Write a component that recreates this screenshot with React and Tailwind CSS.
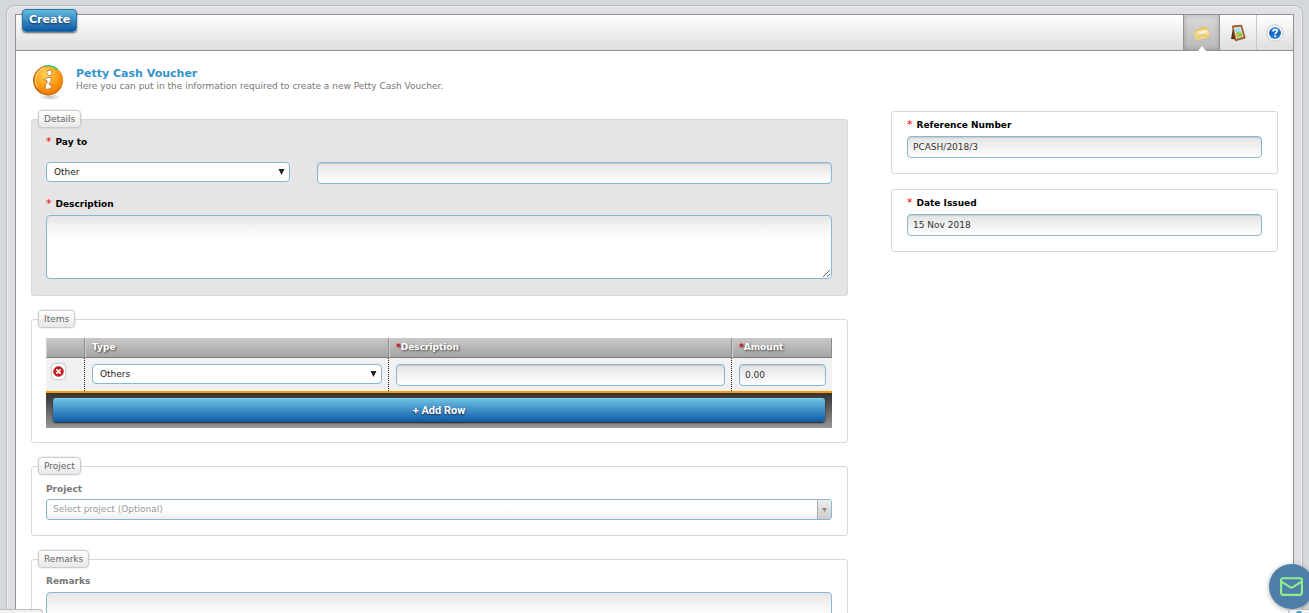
import { useState } from 'react';
import { Mail } from 'lucide-react';

const inputClass =
  'block h-[22px] w-full rounded border border-[#85b8d2] bg-linear-to-b from-[#e4e4e4] to-white px-[5px] text-[9px] text-[#333] shadow-[inset_0_1px_1px_rgba(0,0,0,0.12)] outline-none';

const textareaClass =
  'block h-16 w-full rounded border border-[#85b8d2] bg-white bg-[linear-gradient(#e6e6e6,#fff_22px)] px-[5px] py-1 text-[9px] text-[#333] outline-none';

const InfoIcon = () => (
  <svg width="34" height="36" viewBox="0 0 34 36" aria-hidden="true">
    <defs>
      <radialGradient id="info-fill" cx="0.4" cy="0.3" r="0.75">
        <stop offset="0" stopColor="#ffd75e" />
        <stop offset="0.5" stopColor="#ffa51c" />
        <stop offset="1" stopColor="#ee7600" />
      </radialGradient>
      <radialGradient id="info-shadow">
        <stop offset="0" stopColor="#999" stopOpacity="0.6" />
        <stop offset="1" stopColor="#999" stopOpacity="0" />
      </radialGradient>
    </defs>
    <ellipse cx="19" cy="32" rx="11" ry="3.5" fill="url(#info-shadow)" />
    <circle cx="17" cy="15.5" r="15" fill="#c76a10" />
    <circle cx="17.8" cy="15" r="14" fill="url(#info-fill)" />
    <path d="M6 22A13.4 13.4 0 0 1 14 2.6" fill="none" stroke="#ffe3a0" strokeWidth="1" />
    <path d="M13 1Q21 -.6 27 4.6" fill="none" stroke="#1fd07c" strokeWidth="1.2" />
    <g stroke="#b8702a" strokeWidth="0.9" fill="#fff" strokeLinejoin="round">
      <circle cx="18.4" cy="7.8" r="2.7" />
      <path d="M12.8 14.8Q16 11.4 20.2 12.6Q21.4 15.4 18.4 18.4Q17.6 20.6 21.4 20.4Q21 23.8 17 24.4Q13.4 24.4 14.4 20.8Q15 18.6 16.6 16.6Q16.4 15.2 12.8 14.8Z" />
    </g>
  </svg>
);

const EnvelopeIcon = () => (
  <svg width="18" height="18" viewBox="0 0 18 18" aria-hidden="true">
    <path d="M1.4 7.6L11 2Q12 1.6 12.8 2.6L16.2 7.4L16.4 12.8L2.6 16.4Z" fill="#e9c469" />
    <path d="M3.4 7.8L13.2 5.4L15.4 8L8.4 12Z" fill="#fdf3cf" />
    <path d="M4.6 8.6L13.6 7.4L8.4 11.2Z" fill="#e6eff0" />
    <path d="M1.4 7.6L7.8 10.8L16.2 7.4L16.4 12.8L2.6 16.4Z" fill="#f3d684" />
    <path d="M2.6 16.4L8 10.8L16.4 12.8" fill="none" stroke="#ddb55a" strokeWidth="0.7" />
  </svg>
);

const PictureIcon = () => (
  <svg width="18" height="18" viewBox="0 0 18 18" aria-hidden="true">
    <path d="M4 4L2 15L8 15.4Z" fill="#5b3217" />
    <path d="M3.4 2L12.6 1.2L16.2 14L6.4 16.8Z" fill="#b7622a" stroke="#7d3d16" strokeWidth="0.7" />
    <path d="M4.8 3.6L11.6 3L14.4 12.8L7.2 14.8Z" fill="#f6fafa" />
    <path d="M5.6 4.4L11 3.8L13.4 12.2L7.8 13.8Z" fill="#9be0f4" />
    <path d="M7 9.6L9 7.8L10.4 9L12.6 8.6L13.6 12.2L7.8 13.8Z" fill="#7ecb36" />
    <circle cx="8.6" cy="10.4" r="1.4" fill="#ffb52e" />
  </svg>
);

const HelpIcon = () => (
  <svg width="18" height="18" viewBox="0 0 18 18" aria-hidden="true">
    <defs>
      <linearGradient id="help-fill" x1="0" y1="0" x2="0" y2="1">
        <stop offset="0" stopColor="#4d9be8" />
        <stop offset="0.5" stopColor="#1462bd" />
        <stop offset="1" stopColor="#2f8fe6" />
      </linearGradient>
    </defs>
    <circle cx="9" cy="9" r="8.2" fill="#fafafa" stroke="#bdbdbd" strokeWidth="0.8" />
    <circle cx="9" cy="9" r="6" fill="url(#help-fill)" />
    <path d="M7 7.4Q7 5.6 9.1 5.6Q11.2 5.6 11.2 7.1Q11.2 8.1 10 8.7Q9.1 9.2 9.1 10.2" fill="none" stroke="#fff" strokeWidth="1.6" />
    <circle cx="9.1" cy="12" r="1" fill="#fff" />
  </svg>
);

const DeleteIcon = () => (
  <svg width="11" height="11" viewBox="0 0 12 12" aria-hidden="true">
    <circle cx="6" cy="6" r="5.4" fill="#c81e24" stroke="#9c1216" strokeWidth="0.6" />
    <path d="M4.2 4.2L7.8 7.8M7.8 4.2L4.2 7.8" stroke="#fff" strokeWidth="1.8" strokeLinecap="round" />
  </svg>
);

const Label = ({ htmlFor, required, children }) => (
  <label
    htmlFor={htmlFor}
    className={`block text-[9px] leading-[14px] font-bold ${required ? 'text-black' : 'text-[#777]'}`}
  >
    {required && <span className="mr-1 text-[11px] leading-none font-normal text-[#f00]">*</span>}
    {children}
  </label>
);

const Select = ({ id, label, options }) => (
  <div className="relative">
    <select
      id={id}
      aria-label={label}
      className="block h-5 w-full appearance-none rounded border border-[#85b8d2] bg-white pt-px pr-5 pl-[7px] text-[9px] text-[#222] outline-none"
    >
      {options.map((o) => <option key={o}>{o}</option>)}
    </select>
    <svg className="pointer-events-none absolute top-[7px] right-[5px]" width="7" height="6" viewBox="0 0 7 6" aria-hidden="true">
      <path d="M0.5 0H6.5L3.5 6Z" fill="#222" />
    </svg>
  </div>
);

const Section = ({ title, className = 'pb-[15px]', children }) => (
  <fieldset className={`min-w-0 rounded-[3px] border border-[#d9d9d9] pr-[15px] pl-[14px] ${className}`}>
    <legend className="-ml-2 h-[18px] rounded border border-[#ccc] bg-linear-to-b from-white to-[#e8e8e8] px-[5px] text-[9px] leading-4 text-[#666] shadow-[0_0_2px_rgba(0,0,0,0.2)]">
      {title}
    </legend>
    {children}
  </fieldset>
);

const Card = ({ children }) => (
  <div className="rounded-[3px] border border-[#d9d9d9] px-[15px] pt-[6px] pb-[15px]">
    {children}
  </div>
);

const headClass =
  'h-5 border-r border-b border-r-[#8d8d8d] border-b-[#7b7b7b] border-l border-l-[#d0d0d0] px-[6px] pb-px text-left text-[9px] leading-none font-bold text-white [text-shadow:1px_1px_2px_#444]';

const cellClass = 'h-[33px] border-r border-dotted border-[#222] pt-[6px] pr-[6px] pl-[7px] align-top last:border-r-0';

export default function App() {
  const [rows, setRows] = useState([1]);

  const addRow = () => setRows((prev) => [...prev, Date.now()]);
  const removeRow = (id) => setRows((prev) => prev.filter((r) => r !== id));

  return (
    <div className="h-screen overflow-y-auto bg-[#d4d8db] px-[6px] pt-[5px] font-['DejaVu_Sans',Verdana,sans-serif] [scrollbar-width:none]">
      <div className="min-h-full rounded-t-[9px] border border-[#b6babe] bg-[#dfe0e4] px-2 pt-2 shadow-[inset_0_0_0_1px_#f2f2f5]">
        <div className="border border-[#929292] bg-white">
          {/* Toolbar */}
          <header className="flex h-9 items-start justify-between border-b border-[#929292] bg-linear-to-b from-white to-[#dedede] pl-[6px]">
            <button className="-mt-[6px] h-[23px] rounded border border-[#2a74a8] bg-linear-to-b from-[#62bbdf] to-[#0b58a2] px-[6px] pb-[2px] text-[11px] leading-none font-bold text-white shadow-[0_1px_2px_rgba(0,0,0,0.6)] [text-shadow:0_1px_2px_#124]">
              Create
            </button>
            <nav className="flex h-[35px]">
              <button aria-label="Messages" className="relative flex w-9 items-center justify-center border-l border-[#929292] bg-linear-to-b from-[#dadada] to-[#b9b9b9] shadow-[inset_0_0_5px_rgba(0,0,0,0.2)]">
                <EnvelopeIcon />
                <span className="absolute -bottom-px left-[14px] border-x-[4px] border-b-[5px] border-x-transparent border-b-white" />
              </button>
              <button aria-label="Gallery" className="flex w-[37px] items-center justify-center border-l border-[#929292]">
                <PictureIcon />
              </button>
              <button aria-label="Help" className="flex w-[37px] items-center justify-center border-l border-[#c6c6c6]">
                <HelpIcon />
              </button>
            </nav>
          </header>

          <main className="px-[15px] pt-[14px] pb-8">
            <div className="mb-[9px] flex gap-[10px]">
              <InfoIcon />
              <div className="pt-[2px] pl-px">
                <h1 className="text-[11px] leading-[14px] font-bold text-[#3393cc]">Petty Cash Voucher</h1>
                <p className="text-[9px] leading-[11px] text-[#777]">
                  Here you can put in the information required to create a new Petty Cash Voucher.
                </p>
              </div>
            </div>

            <div className="grid grid-cols-[817fr_387fr] items-start gap-[43px]">
              <form className="flex min-w-0 flex-col gap-[14px]" onSubmit={(e) => e.preventDefault()}>
                <Section title="Details" className="bg-[#e5e5e5] pb-4">
                  <div className="pt-[7px]">
                    <Label htmlFor="pay-type" required>Pay to</Label>
                    <div className="mt-[13px] grid grid-cols-[244fr_515fr] gap-[27px]">
                      <Select id="pay-type" options={['Other', 'Employee', 'Supplier']} />
                      <input aria-label="Payee name" className={inputClass} />
                    </div>
                  </div>
                  <div className="pt-[13px]">
                    <Label htmlFor="description" required>Description</Label>
                    <textarea id="description" className={`mt-1 ${textareaClass}`} />
                  </div>
                </Section>

                <Section title="Items" className="pb-[14px]">
                  <table className="mt-[10px] w-full table-fixed border-separate border-spacing-0">
                    <colgroup>
                      <col className="w-[39px]" />
                      <col className="w-[39%]" />
                      <col className="w-[44%]" />
                      <col className="w-[100px]" />
                    </colgroup>
                    <thead>
                      <tr className="bg-linear-to-b from-[#c9c9c9] to-[#a2a2a2]">
                        <th className={headClass} aria-label="Remove" />
                        <th className={headClass}>Type</th>
                        <th className={headClass}><span className="text-[#d11]">*</span>Description</th>
                        <th className={headClass}><span className="text-[#d11]">*</span>Amount</th>
                      </tr>
                    </thead>
                    <tbody>
                      {rows.map((id) => (
                        <tr key={id} className="bg-[#f1f1f1]">
                          <td className={cellClass}>
                            <button
                              type="button"
                              aria-label="Remove row"
                              onClick={() => removeRow(id)}
                              className="-ml-px flex h-[15px] w-[13px] items-center justify-center rounded-[3px] bg-white shadow-[0_0_2px_rgba(0,0,0,0.5)]"
                            >
                              <DeleteIcon />
                            </button>
                          </td>
                          <td className={cellClass}><Select label="Type" options={['Others', 'Travel', 'Meals']} /></td>
                          <td className={cellClass}><input aria-label="Item description" className={inputClass} /></td>
                          <td className={cellClass}><input aria-label="Amount" defaultValue="0.00" className={inputClass} /></td>
                        </tr>
                      ))}
                    </tbody>
                  </table>
                  <div className="border-t-2 border-[#f90] bg-linear-to-b from-[#333] to-[#999] px-[7px] pt-[5px] pb-[6px]">
                    <button
                      type="button"
                      onClick={addRow}
                      className="block h-6 w-full rounded-[3px] border-t border-[#86cdec] bg-linear-to-b from-[#6bbfe2] to-[#0b5aa4] font-[Roboto,sans-serif] text-[11px] leading-none font-bold text-white shadow-[0_1px_2px_rgba(0,0,0,0.8)] [text-shadow:0_1px_2px_#124]"
                    >
                      + Add Row
                    </button>
                  </div>
                </Section>

                <Section title="Project">
                  <div className="pt-[7px]">
                    <Label htmlFor="project">Project</Label>
                    <div className="relative mt-[3px]">
                      <select
                        id="project"
                        className="block h-[21px] w-full appearance-none rounded-[3px] border border-[#85b8d2] bg-linear-to-b from-white from-50% to-[#eee] pt-px pr-5 pl-[6px] text-[9px] text-[#999] outline-none"
                      >
                        <option>Select project (Optional)</option>
                      </select>
                      <span className="pointer-events-none absolute inset-y-px right-px flex w-[14px] items-center justify-center rounded-r-[2px] border-l border-[#aaa] bg-linear-to-b from-[#eee] to-[#ccc]">
                        <svg width="5" height="4" viewBox="0 0 5 4" aria-hidden="true">
                          <path d="M0 0H5L2.5 4Z" fill="#888" />
                        </svg>
                      </span>
                    </div>
                  </div>
                </Section>

                <Section title="Remarks">
                  <div className="pt-[6px]">
                    <Label htmlFor="remarks">Remarks</Label>
                    <textarea id="remarks" className={`mt-1 ${textareaClass}`} />
                  </div>
                </Section>
              </form>

              <aside className="flex min-w-0 flex-col gap-[15px] pt-px">
                <Card>
                  <Label htmlFor="reference" required>Reference Number</Label>
                  <input id="reference" defaultValue="PCASH/2018/3" className={`mt-1 ${inputClass}`} />
                </Card>
                <Card>
                  <Label htmlFor="date-issued" required>Date Issued</Label>
                  <input id="date-issued" defaultValue="15 Nov 2018" className={`mt-1 ${inputClass}`} />
                </Card>
              </aside>
            </div>
          </main>
        </div>
      </div>

      {/* Floating chat button and the collapsed bars under it */}
      <button
        aria-label="Contact us"
        className="fixed -right-[5px] bottom-1 flex h-[45px] w-[45px] items-center justify-center rounded-full bg-[#4d7fa8] text-[#90ee90] shadow-[0_1px_5px_rgba(0,0,0,0.35)]"
      >
        <Mail size={25} strokeWidth={2} />
      </button>
      <div className="fixed bottom-0 left-0 h-1 w-[43px] rounded-tr border-t border-r border-[#bbb] bg-[#f3f3f3]" />
      <div className="fixed right-0 bottom-0 flex h-1 w-[21px] justify-center rounded-tl border-t border-l border-[#bbb] bg-[#f3f3f3]">
        <span className="mt-px h-[2px] w-[6px] rounded-t bg-[#4aa3c8]" />
      </div>
    </div>
  );
}
